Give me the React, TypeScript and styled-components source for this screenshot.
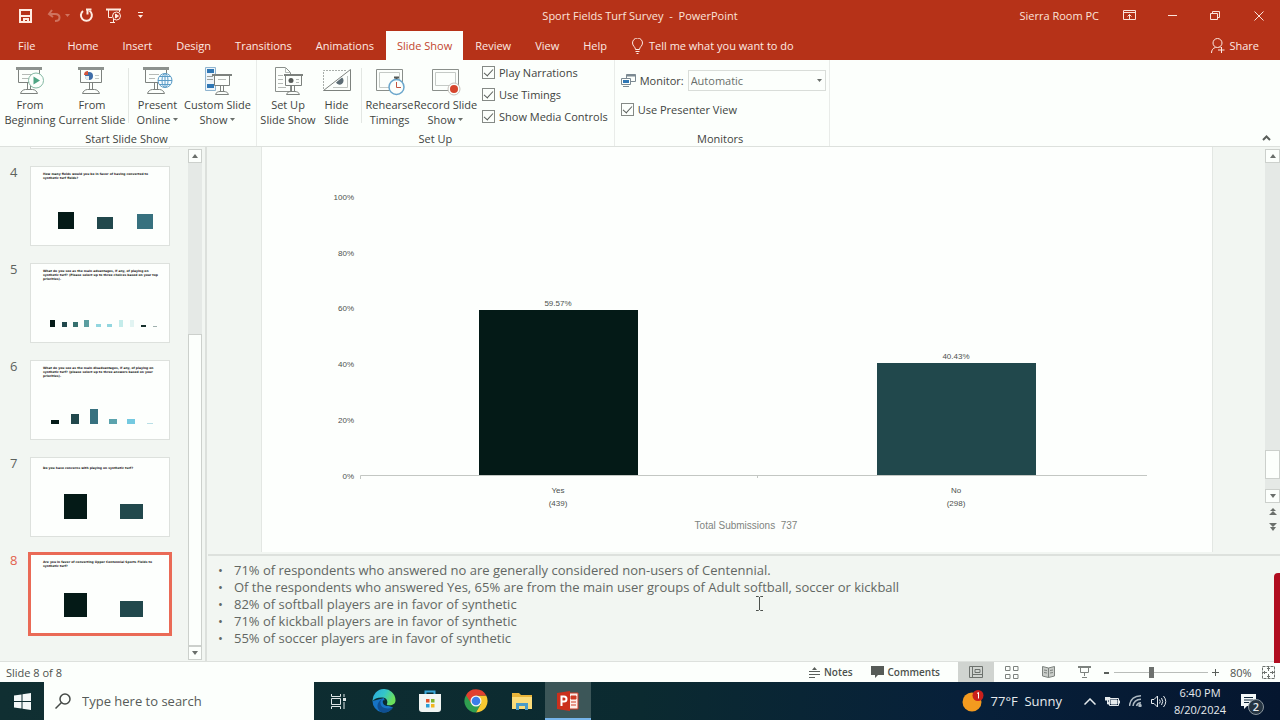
import React from "react";
import styled, { createGlobalStyle, css } from "styled-components";

const GlobalStyle = createGlobalStyle`
  * { box-sizing: border-box; }
  body {
    margin: 0;
    background: #fcfffc;
    color: #3f4441;
    font-family: "Open Sans", "Noto Sans", sans-serif;
    font-size: 11px;
    line-height: 15px;
  }
  button, input, select {
    font: inherit;
    color: inherit;
    margin: 0;
    padding: 0;
    border: 0;
    background: none;
  }
  svg { display: block; flex: none; }
  ul, ol, h2, p { margin: 0; padding: 0; list-style: none; font-size: inherit; font-weight: inherit; }
`;

const RED = "#b63218";
const PANEL = "#f2f6f2";
const LINE = "#dde1dd";

const Window = styled.div`
  position: relative;
  display: flex;
  flex-direction: column;
  height: 100vh;
  min-height: 600px;
  overflow: hidden;
`;

/* ---------- title bar ---------- */

const TitleBar = styled.header`
  display: grid;
  grid-template-columns: 1fr auto 1fr;
  align-items: center;
  height: 31px;
  background: ${RED};
  color: #fbe3da;
`;

const QuickAccess = styled.div`
  display: flex;
  align-items: center;
  padding-left: 18px;
`;

const QuickButton = styled.button<{ $w: number; $dim?: boolean }>`
  display: grid;
  place-items: center start;
  width: ${(p) => p.$w}px;
  height: 24px;
  opacity: ${(p) => (p.$dim ? 0.35 : 1)};
`;

const WindowControls = styled.div`
  display: flex;
  align-items: center;
  justify-content: flex-end;
`;

const UserName = styled.span`
  padding-right: 9px;
`;

const WindowButton = styled.button`
  display: grid;
  place-items: center;
  width: 43px;
  height: 30px;
`;

/* ---------- tabs ---------- */

const TabBar = styled.nav`
  display: flex;
  align-items: stretch;
  height: 29px;
  background: ${RED};
  color: #fdeae3;
`;

const Tab = styled.button<{ $active?: boolean; $file?: boolean }>`
  padding: ${(p) => (p.$file ? "0 20px 0 18px" : "0 12px")};
  font-weight: 500;
  ${(p) =>
    p.$active &&
    css`
      padding: 0 11px;
      background: #fcfffc;
      color: #c2452e;
    `}
`;

const TellMe = styled.button`
  display: flex;
  align-items: center;
  gap: 6px;
  padding: 0 13px;
  font-weight: 500;
`;

const ShareButton = styled(TellMe)`
  margin-left: auto;
  padding: 0 21px 0 0;
  gap: 4px;
`;

/* ---------- ribbon ---------- */

const Ribbon = styled.section`
  display: flex;
  height: 87px;
  border-bottom: 1px solid ${LINE};
`;

const Group = styled.div<{ $pad?: number }>`
  display: flex;
  flex-direction: column;
  justify-content: space-between;
  padding: 4px 3px 0 ${(p) => p.$pad ?? 0}px;
  border-right: 1px solid #e9ece9;
`;

const GroupBody = styled.div`
  display: flex;
`;

const GroupLabel = styled.h2`
  text-align: center;
  line-height: 15px;
`;

const BigButton = styled.button<{ $w: number }>`
  display: flex;
  flex-direction: column;
  align-items: center;
  width: ${(p) => p.$w}px;
  padding-top: 3px;
  white-space: nowrap;
`;

const Caption = styled.span`
  display: block;
  text-align: center;
`;

const Separator = styled.span`
  width: 1px;
  margin: 4px 4px;
  background: #e3e7e3;
`;

const CheckList = styled.div`
  display: flex;
  flex-direction: column;
  gap: 7px;
  padding: 1px 3px 0 4px;
`;

const CheckLabel = styled.label`
  display: flex;
  align-items: center;
  gap: 4px;
  white-space: nowrap;
`;

const CheckBox = styled.input`
  appearance: none;
  display: grid;
  place-items: center;
  width: 13px;
  height: 13px;
  border: 1px solid #858a86;
  &:checked::after {
    content: "";
    width: 8px;
    height: 4px;
    border: solid #5a5f5b;
    border-width: 0 0 1px 1px;
    transform: translateY(-1px) rotate(-48deg);
  }
`;

const MonitorPanel = styled.div`
  display: flex;
  flex-direction: column;
  gap: 11px;
  padding: 6px 0 0 6px;
`;

const MonitorRow = styled.label`
  display: flex;
  align-items: center;
  gap: 4px;
`;

const SelectWrap = styled.span`
  position: relative;
  display: block;
  svg {
    position: absolute;
    right: 4px;
    top: 9px;
    pointer-events: none;
  }
`;

const MonitorSelect = styled.select`
  appearance: none;
  display: block;
  width: 138px;
  height: 21px;
  padding: 0 2px;
  border: 1px solid #d9ddd9;
  color: #6a6f6b;
`;

const CollapseButton = styled.button`
  align-self: flex-end;
  margin-left: auto;
  padding: 0 9px 5px;
`;

/* ---------- workspace ---------- */

const Workspace = styled.main`
  display: flex;
  flex: 1;
  min-height: 0;
  background: ${PANEL};
`;

const SlideList = styled.ol`
  display: flex;
  flex-direction: column;
  justify-content: flex-end;
  gap: 17px;
  width: 188px;
  padding-bottom: 27px;
  overflow: hidden;
`;

const SlideItem = styled.li<{ $active?: boolean }>`
  display: flex;
  flex: none;
  color: ${(p) => (p.$active ? "#e2604c" : "#5d625e")};
  font-size: 13px;
  line-height: 12px;
`;

const SlideNumber = styled.span`
  width: 30px;
  padding-left: 10px;
`;

const Thumb = styled.button<{ $active?: boolean }>`
  display: flex;
  flex-direction: column;
  width: 140px;
  height: 80px;
  background: #fdfffd;
  border: 1px solid #dde1dd;
  text-align: left;
  ${(p) =>
    p.$active &&
    css`
      border-color: #ea6a56;
      outline: 2px solid #ea6a56;
    `}
`;

const ThumbTitle = styled.span<{ $low?: boolean }>`
  height: 20px;
  padding: ${(p) => (p.$low ? 8 : 5)}px 0 0 12px;
  color: #111;
  font: 700 3px/4px "DejaVu Sans", sans-serif;
  white-space: pre;
`;

const Scroll = styled.div<{ $w: number }>`
  display: flex;
  flex-direction: column;
  width: ${(p) => p.$w}px;
  padding: 2px 0 1px;
`;

const ScrollButton = styled.button<{ $plain?: boolean }>`
  display: grid;
  place-items: center;
  height: ${(p) => (p.$plain ? 16 : 14)}px;
  border: ${(p) => (p.$plain ? "0" : "1px solid #ccd0cc")};
  background: ${(p) => (p.$plain ? "transparent" : "#fcfffc")};
`;

const Track = styled.div`
  display: flex;
  flex-direction: column;
  flex: 1;
  background: #e5e9e6;
`;

const TrackSpace = styled.span<{ $size: number }>`
  flex: ${(p) => p.$size};
`;

const TrackThumb = styled.span<{ $size: number }>`
  flex: ${(p) => p.$size};
  border: 1px solid #ccd0cc;
  background: #fcfffc;
`;

const TrackEnd = styled.span`
  height: 18px;
`;

const Splitter = styled.div`
  width: 5px;
  margin-right: 1px;
  border-right: 2px solid #dce0dc;
`;

const Editor = styled.div`
  display: flex;
  flex: 1;
  flex-direction: column;
  min-width: 0;
`;

const Stage = styled.div`
  display: flex;
  flex: 1;
  min-height: 0;
`;

const Slide = styled.article`
  flex: 1;
  margin: 0 52px 2px 53px;
  border: solid #e3e7e3;
  border-width: 0 1px;
  background: #fdfffd;
  overflow: hidden;
`;

const Notes = styled.ul`
  min-height: 107px;
  padding: 6px 10px 14px;
  border-top: 2px solid ${LINE};
  color: #626763;
  font-size: 13px;
  line-height: 17px;
`;

const Note = styled.li`
  display: flex;
  &::before {
    content: "•";
    width: 16px;
  }
`;

/* ---------- status bar ---------- */

const StatusBar = styled.footer`
  display: flex;
  align-items: center;
  height: 21px;
  padding: 0 5px 0 6px;
  border-top: 1px solid ${LINE};
  color: #4c514d;
`;

const StatusLeft = styled.span`
  margin-right: auto;
`;

const StatusButton = styled.button`
  display: flex;
  align-items: center;
  gap: 4px;
  margin-right: 18px;
  font-size: 10px;
  font-weight: 600;
`;

const ViewButton = styled.button<{ $active?: boolean }>`
  display: grid;
  place-items: center;
  width: 36px;
  height: 20px;
  background: ${(p) => (p.$active ? "#d0d4d0" : "transparent")};
`;

const ZoomButton = styled.button`
  display: grid;
  place-items: center;
  min-width: 9px;
`;

const ZoomSlider = styled.input`
  appearance: none;
  width: 94px;
  height: 12px;
  margin: 0 3px;
  background: linear-gradient(#b9bdb9, #b9bdb9) center / 100% 1px no-repeat;
  &::-webkit-slider-thumb {
    appearance: none;
    width: 5px;
    height: 11px;
    background: #6d716e;
  }
`;

const ZoomValue = styled.span`
  width: 42px;
  padding-left: 10px;
`;

/* ---------- task bar ---------- */

const TaskBar = styled.div`
  display: flex;
  align-items: center;
  height: 38px;
  background: linear-gradient(90deg, #102f32, #0b2a30 50%, #07203a 75%, #05162f);
  color: #e6ebee;
`;

const StartButton = styled.button`
  display: grid;
  place-items: center;
  width: 44px;
  height: 38px;
`;

const SearchBox = styled.label`
  display: flex;
  align-items: center;
  gap: 11px;
  width: 270px;
  height: 38px;
  padding-left: 11px;
  background: #fcfffc;
  color: #565b58;
  font-size: 13px;
  input { width: 180px; }
  input::placeholder { color: #565b58; opacity: 1; }
`;

const TaskButtons = styled.div`
  display: flex;
  padding-left: 1px;
`;

const TaskButton = styled.button<{ $active?: boolean }>`
  display: grid;
  place-items: center;
  width: 46px;
  height: 38px;
  border: solid transparent;
  border-width: 2px 0;
  ${(p) =>
    p.$active &&
    css`
      background: #3c5658;
      border-top-color: #3c5658;
      border-bottom-color: #76b4ea;
    `}
`;

const Tray = styled.div`
  display: flex;
  align-items: center;
  margin-left: auto;
`;

const Weather = styled.button`
  display: flex;
  align-items: center;
  gap: 7px;
  margin-right: 16px;
  font-size: 13px;
`;

const TrayButton = styled.button`
  display: grid;
  place-items: center;
  width: 23px;
  height: 38px;
`;

const Clock = styled.button`
  width: 60px;
  text-align: center;
  line-height: 17px;
`;

const Bell = styled.button`
  position: relative;
  width: 50px;
  height: 38px;
  padding-left: 11px;
`;

const BellBadge = styled.span`
  position: absolute;
  left: 18px;
  top: 17px;
  width: 16px;
  height: 16px;
  border: 1px solid #8b969f;
  border-radius: 50%;
  background: #253442;
  font-weight: 600;
  line-height: 14px;
`;

const RecordingEdge = styled.div`
  position: absolute;
  right: 0;
  bottom: 57px;
  width: 6px;
  height: 90px;
  border-radius: 4px 0 0 0;
  background: #b00d1f;
`;

const Pointer = styled.svg`
  position: absolute;
  left: 755px;
  top: 596px;
`;

/* ---------- drawings ---------- */

const Triangle = ({ up }: { up?: boolean }) => (
  <svg width="6" height="4" viewBox="0 0 6 4">
    <path d={up ? "M0 4L3 0L6 4z" : "M0 0H6L3 4z"} fill="#6a6f6b" />
  </svg>
);

const Caret = () => (
  <svg width="5" height="3" viewBox="0 0 5 3">
    <path d="M0 0H5L2.5 3z" fill="#6a6f6b" />
  </svg>
);

const CaretLine = styled.span`
  display: flex;
  align-items: center;
  justify-content: center;
  gap: 3px;
`;

const Easel = ({ x = 0, y = 0 }: { x?: number; y?: number }) => (
  <g transform={`translate(${x} ${y})`} fill="none" stroke="#7d827e">
    <path d="M2.500 3V15.500H23.500V3" fill="#fcfffc" />
    <path d="M0 1.500H26" strokeWidth="3" stroke="#8d928e" />
    <path d="M11.500 16V23M14.500 16V23" />
    <path d="M4.500 26.500H21.500C21 24.500 19 22.500 16.500 22.500H9.500C7 22.500 5 24.500 4.500 26.500z" />
  </g>
);

const FromBeginningIcon = () => (
  <svg width="30" height="30" viewBox="0 0 30 30">
    <Easel x={1} />
    <path d="M7 7.500H20M7 11.500H14" stroke="#b5bab6" />
    <circle cx="21" cy="13.500" r="7.500" fill="#fcfffc" stroke="#83b9a3" />
    <path d="M18.500 9.500V17.500L25 13.500z" fill="#4fa584" />
  </svg>
);

const FromCurrentIcon = () => (
  <svg width="30" height="30" viewBox="0 0 30 30">
    <Easel x={1} />
    <circle cx="12" cy="9" r="4" fill="#3d6da8" />
    <path d="M11 8V4A4 4 0 0 0 7 8z" fill="#d2543c" />
    <path d="M12 9V13A4 4 0 0 1 8 9z" fill="#e8eef0" />
    <path d="M18 8.500H22M18 11.500H22" stroke="#c5cac6" />
  </svg>
);

const PresentOnlineIcon = () => (
  <svg width="30" height="30" viewBox="0 0 30 30">
    <Easel />
    <path d="M6 7.500H16M6 11.500H12" stroke="#b5bab6" />
    <g fill="#f4fbff" stroke="#5a9cc6">
      <circle cx="22" cy="13.500" r="7" />
      <ellipse cx="22" cy="13.500" rx="3" ry="7" />
      <path d="M15 13.500H29M16.500 9.500H27.500M16.500 17.500H27.500M22 6.500V20.500" />
    </g>
  </svg>
);

const CustomShowIcon = () => (
  <svg width="30" height="30" viewBox="0 0 30 30">
    <path d="M2.500 .500H12.500V23.500H2.500z" fill="#eef5fa" stroke="#8fb4cf" />
    <path d="M4 2H11V6H4zM4 17H11V21H4z" fill="#2f77b5" />
    <path d="M4 9.500H10M4 12.500H10" stroke="#9aa09c" />
    <g fill="none" stroke="#7d827e">
      <path d="M11.500 9V18.500H26.500V9" fill="#fcfffc" />
      <path d="M9 8H29" strokeWidth="2" />
      <path d="M17.500 18.500V24M20.500 18.500V24M12.500 27.500H25.500C25 25.500 23 24.500 21 24.500H17C15 24.500 13 25.500 12.500 27.500z" />
      <path d="M15 12.500H23" stroke="#b5bab6" />
    </g>
  </svg>
);

const SetUpIcon = () => (
  <svg width="30" height="30" viewBox="0 0 30 30">
    <g fill="none" stroke="#8a8f8b">
      <path d="M2.500 .500H12.500L17.500 5.500V24.500H2.500z" />
      <path d="M12.500 .500V5.500H17.500M5 8.500H10M5 12.500H10M5 16.500H10M5 20.500H13" stroke="#b5bab6" />
      <path d="M12.500 9V18.500H28.500V9" fill="#fcfffc" stroke="#7d827e" />
      <path d="M11 8H30" strokeWidth="2" stroke="#7d827e" />
      <path d="M18.500 18.500V24M21.500 18.500V24M13.500 27.500H26.500C26 25.500 24 24.500 22 24.500H18C16 24.500 14 25.500 13.500 27.500z" stroke="#7d827e" />
    </g>
    <circle cx="18" cy="13.500" r="2.500" fill="#555a57" />
    <path d="M23 12.500H26M23 15.500H26" stroke="#b5bab6" />
  </svg>
);

const HideIcon = () => (
  <svg width="30" height="30" viewBox="0 0 30 30">
    <path d="M1.500 22V3.500H25" fill="none" stroke="#a9aeaa" strokeDasharray="2 1" />
    <path d="M1.500 23.500L28.500 2.500V23.500z" fill="#fcfffc" stroke="#7d827e" />
    <path d="M11 20.500H25.500V9" fill="none" stroke="#c0c5c1" />
    <path d="M14 15.500L20 10.500A4 4 0 1 1 14 15.500z" fill="#5c6c74" />
  </svg>
);

const RehearseIcon = () => (
  <svg width="30" height="30" viewBox="0 0 30 30">
    <path d="M1.500 2.500H27.500V23.500H1.500z" fill="#fcfffc" stroke="#8a8f8b" />
    <path d="M4.500 5.500H24.500V20.500H4.500z" fill="none" stroke="#c5cac6" />
    <circle cx="21.500" cy="20" r="7.500" fill="#fcfffc" stroke="#6aa6cc" strokeWidth="1.500" />
    <path d="M19 10.500H24M21.500 10V12" stroke="#555a57" strokeWidth="2" />
    <path d="M21.500 15V20.500H26" fill="none" stroke="#c45440" />
  </svg>
);

const RecordIcon = () => (
  <svg width="30" height="30" viewBox="0 0 30 30">
    <path d="M1.500 2.500H27.500V23.500H1.500z" fill="#fcfffc" stroke="#8a8f8b" />
    <path d="M4.500 5.500H24.500V18.500H4.500z" fill="none" stroke="#c5cac6" />
    <circle cx="23" cy="22" r="6" fill="#fcfffc" stroke="#c7c3be" />
    <circle cx="23" cy="22" r="4" fill="#d6452c" />
  </svg>
);

const MonitorIcon = () => (
  <svg width="15" height="15" viewBox="0 0 15 15" fill="#fcfffc" stroke="#7c8a92">
    <path d="M5.500 1.500H14.500V8.500H5.500z" />
    <path d="M5.500 2.500H14.500" strokeWidth="2" />
    <path d="M.500 5.500H9.500V11.500H.500z" />
    <path d="M2 7H8V10H2z" fill="#2f77b5" stroke="none" />
    <path d="M2 13.500H8" />
  </svg>
);

type Bar = { x: number; w: number; h: number; c: string };

const thumbs: { n: number; title: string; low?: boolean; base: number; bars: Bar[] }[] = [
  { n: 3, title: "", base: 40, bars: [] },
  {
    n: 4,
    title: "How many fields would you be in favor of having converted to\nsynthetic turf fields?",
    base: 42,
    bars: [
      { x: 27, w: 16, h: 17, c: "#041a17" },
      { x: 66, w: 16, h: 12, c: "#21484c" },
      { x: 106, w: 16, h: 15, c: "#37717f" },
    ],
  },
  {
    n: 5,
    title:
      "What do you see as the main advantages, if any, of playing on\nsynthetic turf? (Please select up to three choices based on your top\npriorities).",
    base: 43,
    bars: [
      { x: 19, w: 5, h: 7, c: "#041a17" },
      { x: 31, w: 5, h: 5, c: "#21484c" },
      { x: 42, w: 5, h: 5, c: "#37716f" },
      { x: 53, w: 5, h: 7, c: "#5b9ea0" },
      { x: 65, w: 5, h: 3, c: "#92d6df" },
      { x: 76, w: 5, h: 3, c: "#92d6df" },
      { x: 88, w: 4, h: 7, c: "#c4ecea" },
      { x: 99, w: 4, h: 7, c: "#e2f4f2" },
      { x: 110, w: 5, h: 2, c: "#16302c" },
      { x: 122, w: 4, h: 1, c: "#9fb0ae" },
    ],
  },
  {
    n: 6,
    title:
      "What do you see as the main disadvantages, if any, of playing on\nsynthetic turf? (please select up to three answers based on your\npriorities).",
    base: 43,
    bars: [
      { x: 20, w: 8, h: 4, c: "#041a17" },
      { x: 40, w: 8, h: 10, c: "#21484c" },
      { x: 59, w: 8, h: 15, c: "#37717f" },
      { x: 78, w: 8, h: 5, c: "#5ba3ad" },
      { x: 96, w: 8, h: 5, c: "#74c9e0" },
      { x: 116, w: 6, h: 1, c: "#b9dfe6" },
    ],
  },
  {
    n: 7,
    title: "Do you have concerns with playing on synthetic turf?",
    low: true,
    base: 41,
    bars: [
      { x: 33, w: 23, h: 25, c: "#041a17" },
      { x: 89, w: 23, h: 15, c: "#21484c" },
    ],
  },
  {
    n: 8,
    title: "Are you in favor of converting Upper Centennial Sports Fields to\nsynthetic turf?",
    base: 42,
    bars: [
      { x: 33, w: 23, h: 24, c: "#041a17" },
      { x: 89, w: 23, h: 16, c: "#21484c" },
    ],
  },
];

const ChartText = styled.text`
  font: 8px "Liberation Sans Narrow", "Liberation Sans", sans-serif;
  fill: #4c514d;
`;

const ChartTotal = styled(ChartText)`
  font-size: 10px;
  fill: #7f8480;
`;

const ticks = [
  ["100%", 53],
  ["80%", 109],
  ["60%", 164],
  ["40%", 220],
  ["20%", 276],
  ["0%", 332],
] as const;

const Chart = () => (
  <svg width="100%" viewBox="0 0 950 405" role="img" aria-label="Survey results">
    {ticks.map(([t, y]) => (
      <ChartText key={t} x="92" y={y} textAnchor="end">{t}</ChartText>
    ))}
    <path d="M98.500 332V328.500H885M495.500 329V331" fill="none" stroke="#c3c7c3" />
    <rect x="217" y="163" width="159" height="165" fill="#041a17" />
    <rect x="615" y="216" width="159" height="112" fill="#21484c" />
    <g textAnchor="middle">
      <ChartText x="296" y="159">59.57%</ChartText>
      <ChartText x="694" y="212">40.43%</ChartText>
      <ChartText x="296" y="346">Yes</ChartText>
      <ChartText x="296" y="359">(439)</ChartText>
      <ChartText x="694" y="346">No</ChartText>
      <ChartText x="694" y="359">(298)</ChartText>
      <ChartTotal x="484" y="382">Total Submissions&nbsp; 737</ChartTotal>
    </g>
  </svg>
);

const notes = [
  "71% of respondents who answered no are generally considered non-users of Centennial.",
  "Of the respondents who answered Yes, 65% are from the main user groups of Adult softball, soccer or kickball",
  "82% of softball players are in favor of synthetic",
  "71% of kickball players are in favor of synthetic",
  "55% of soccer players are in favor of synthetic",
];

const Big = ({ w, icon, a, b, menu }: { w: number; icon: React.ReactNode; a: string; b: string; menu?: boolean }) => (
  <BigButton $w={w}>
    {icon}
    <Caption>
      {a}
      <CaretLine>
        {b}
        {menu && <Caret />}
      </CaretLine>
    </Caption>
  </BigButton>
);

const Check = ({ label }: { label: string }) => (
  <CheckLabel>
    <CheckBox type="checkbox" defaultChecked />
    {label}
  </CheckLabel>
);

export default function App() {
  return (
    <Window>
      <GlobalStyle />
      <TitleBar>
        <QuickAccess>
          <QuickButton $w={29} aria-label="Save">
            <svg width="15" height="14" viewBox="0 0 15 14" fill="none" stroke="#ffece2" strokeWidth="2">
              <path d="M2 1H13V13H2z" />
              <path d="M2 7H13M6 13V10H10V13" />
            </svg>
          </QuickButton>
          <QuickButton $w={32} $dim aria-label="Undo">
            <svg width="24" height="14" viewBox="0 0 24 14" fill="none" stroke="#ffece2" strokeWidth="2">
              <path d="M5 1L2 5L6 8M2 5H8C14 5 14 12 8 12" />
              <path d="M18 5H23L20.500 8z" fill="#ffece2" stroke="none" />
            </svg>
          </QuickButton>
          <QuickButton $w={27} aria-label="Redo">
            <svg width="15" height="15" viewBox="0 0 15 15" fill="none" stroke="#ffece2" strokeWidth="2">
              <path d="M4 3A5.500 5.500 0 1 0 10.500 2.800" />
              <path d="M7 1.500H12.500M8.500 1V6.500" />
            </svg>
          </QuickButton>
          <QuickButton $w={31} aria-label="Start from beginning">
            <svg width="16" height="16" viewBox="0 0 16 16" fill="none" stroke="#ffece2">
              <path d="M0 1.500H15" strokeWidth="2" />
              <path d="M2.500 2V9.500H6M13.500 2V4M4 14.500H9M7.500 11V14" />
              <circle cx="10.500" cy="8" r="4" />
              <path d="M9.500 6V10L12.500 8z" fill="#ffece2" />
            </svg>
          </QuickButton>
          <QuickButton $w={10} aria-label="Customize toolbar">
            <svg width="7" height="7" viewBox="0 0 7 7" fill="#ffece2">
              <path d="M1 0H6V1H1zM1 3H6L3.500 6z" />
            </svg>
          </QuickButton>
        </QuickAccess>
        <span>Sport Fields Turf Survey&nbsp; -&nbsp; PowerPoint</span>
        <WindowControls>
          <UserName>Sierra Room PC</UserName>
          <WindowButton aria-label="Ribbon display options">
            <svg width="13" height="11" viewBox="0 0 13 11" fill="none" stroke="#fbe3da">
              <path d="M.500 .500H12.500V9.500H.500zM.500 2.500H12.500M6.500 9V4.500M4.500 6.500L6.500 4.500L8.500 6.500" />
            </svg>
          </WindowButton>
          <WindowButton aria-label="Minimize">
            <svg width="10" height="2" viewBox="0 0 10 2" fill="#fbe3da">
              <path d="M0 0H9V1H0z" />
            </svg>
          </WindowButton>
          <WindowButton aria-label="Restore">
            <svg width="11" height="11" viewBox="0 0 11 11" fill="none" stroke="#fbe3da">
              <path d="M.500 3.500H7.500V9.500H.500zM2.500 3V1.500H9.500V7.500H8" />
            </svg>
          </WindowButton>
          <WindowButton aria-label="Close">
            <svg width="10" height="10" viewBox="0 0 10 10" fill="none" stroke="#fbe3da">
              <path d="M.500 .500L9.500 9.500M9.500 .500L.500 9.500" />
            </svg>
          </WindowButton>
        </WindowControls>
      </TitleBar>

      <TabBar>
        <Tab $file>File</Tab>
        {["Home", "Insert", "Design", "Transitions", "Animations"].map((t) => (
          <Tab key={t}>{t}</Tab>
        ))}
        <Tab $active>Slide Show</Tab>
        {["Review", "View", "Help"].map((t) => (
          <Tab key={t}>{t}</Tab>
        ))}
        <TellMe>
          <svg width="11" height="16" viewBox="0 0 11 16" fill="none" stroke="#fdeae3">
            <path d="M3.500 11.500C3.500 9 .500 8 .500 5A5 5 0 0 1 10.500 5C10.500 8 7.500 9 7.500 11.500zM3.500 13.500H7.500M4.500 15.500H6.500" />
          </svg>
          Tell me what you want to do
        </TellMe>
        <ShareButton>
          <svg width="14" height="15" viewBox="0 0 14 15" fill="none" stroke="#fdeae3">
            <circle cx="6.500" cy="5" r="4.500" />
            <path d="M.500 15C.500 12 2 10 4.500 9.500M8.500 9L9.500 9.500M7 12H13.500M10.500 9V15" />
          </svg>
          Share
        </ShareButton>
      </TabBar>

      <Ribbon>
        <Group>
          <GroupBody>
            <Big w={60} icon={<FromBeginningIcon />} a="From" b="Beginning" />
            <Big w={64} icon={<FromCurrentIcon />} a="From" b="Current Slide" />
            <Separator />
            <Big w={49} icon={<PresentOnlineIcon />} a="Present" b="Online" menu />
            <Big w={71} icon={<CustomShowIcon />} a="Custom Slide" b="Show" menu />
          </GroupBody>
          <GroupLabel>Start Slide Show</GroupLabel>
        </Group>
        <Group $pad={3}>
          <GroupBody>
            <Big w={56} icon={<SetUpIcon />} a="Set Up" b="Slide Show" />
            <Big w={41} icon={<HideIcon />} a="Hide" b="Slide" />
            <Separator />
            <Big w={47} icon={<RehearseIcon />} a="Rehearse" b="Timings" />
            <Big w={65} icon={<RecordIcon />} a="Record Slide" b="Show" menu />
            <CheckList>
              <Check label="Play Narrations" />
              <Check label="Use Timings" />
              <Check label="Show Media Controls" />
            </CheckList>
          </GroupBody>
          <GroupLabel>Set Up</GroupLabel>
        </Group>
        <Group>
          <MonitorPanel>
            <MonitorRow>
              <MonitorIcon />
              Monitor:
              <SelectWrap>
                <MonitorSelect>
                  <option>Automatic</option>
                </MonitorSelect>
                <Caret />
              </SelectWrap>
            </MonitorRow>
            <Check label="Use Presenter View" />
          </MonitorPanel>
          <GroupLabel>Monitors</GroupLabel>
        </Group>
        <CollapseButton aria-label="Collapse ribbon">
          <svg width="9" height="6" viewBox="0 0 9 6" fill="none" stroke="#5a5f5b" strokeWidth="2">
            <path d="M1 5L4.500 1.500L8 5" />
          </svg>
        </CollapseButton>
      </Ribbon>

      <Workspace>
        <SlideList>
          {thumbs.map((t) => {
            const active = t.n === 8;
            return (
              <SlideItem key={t.n} $active={active}>
                <SlideNumber>{t.title && t.n}</SlideNumber>
                <Thumb $active={active} aria-label={`Slide ${t.n}`}>
                  <ThumbTitle $low={t.low}>{t.title}</ThumbTitle>
                  <svg width="138" height="50" viewBox="0 0 138 50">
                    {t.bars.map((b) => (
                      <rect key={b.x} x={b.x} y={t.base - b.h} width={b.w} height={b.h} fill={b.c} />
                    ))}
                  </svg>
                </Thumb>
              </SlideItem>
            );
          })}
        </SlideList>
        <Scroll $w={14}>
          <ScrollButton aria-label="Scroll up"><Triangle up /></ScrollButton>
          <Track>
            <TrackSpace $size={172} />
            <TrackThumb $size={311} />
          </Track>
          <ScrollButton aria-label="Scroll down"><Triangle /></ScrollButton>
        </Scroll>
        <Splitter />
        <Editor>
          <Stage>
            <Slide>
              <Chart />
            </Slide>
            <Scroll $w={15}>
              <ScrollButton aria-label="Scroll up"><Triangle up /></ScrollButton>
              <Track>
                <TrackSpace $size={289} />
                <TrackThumb $size={27} />
                <TrackSpace $size={10} />
              </Track>
              <ScrollButton aria-label="Scroll down"><Triangle /></ScrollButton>
              <ScrollButton $plain aria-label="Previous slide">
                <svg width="8" height="9" viewBox="0 0 8 9" fill="#6a6f6b">
                  <path d="M1 4L4 1L7 4zM0 8L4 4L8 8z" />
                </svg>
              </ScrollButton>
              <ScrollButton $plain aria-label="Next slide">
                <svg width="8" height="9" viewBox="0 0 8 9" fill="#6a6f6b">
                  <path d="M0 0H8L4 4zM1 4H7L4 8z" />
                </svg>
              </ScrollButton>
              <TrackEnd />
            </Scroll>
          </Stage>
          <Notes>
            {notes.map((n) => (
              <Note key={n}>{n}</Note>
            ))}
          </Notes>
        </Editor>
      </Workspace>

      <StatusBar>
        <StatusLeft>Slide 8 of 8</StatusLeft>
        <StatusButton>
          <svg width="11" height="11" viewBox="0 0 11 11" fill="#5a5f5b">
            <path d="M3 3L5.500 0L8 3zM0 4H11V5H0zM0 7H11V8H0zM0 10H6V11H0z" />
          </svg>
          Notes
        </StatusButton>
        <StatusButton>
          <svg width="13" height="12" viewBox="0 0 13 12" fill="#565b57">
            <path d="M0 0H13V9H7L4 12V9H0z" />
          </svg>
          Comments
        </StatusButton>
        <ViewButton $active aria-label="Normal view">
          <svg width="14" height="12" viewBox="0 0 14 12" fill="none" stroke="#6d726e">
            <path d="M.500 .500H13.500V11.500H.500zM3.500 .500V11.500M3.500 8.500H13.500M6 3.500H11V6.500H6z" />
          </svg>
        </ViewButton>
        <ViewButton aria-label="Slide sorter">
          <svg width="14" height="13" viewBox="0 0 14 13" fill="none" stroke="#7d827e">
            <path d="M.500 .500H5V4.500H.500zM8.500 .500H13V4.500H8.500zM.500 8.500H5V12.500H.500zM8.500 8.500H13V12.500H8.500z" />
          </svg>
        </ViewButton>
        <ViewButton aria-label="Reading view">
          <svg width="13" height="12" viewBox="0 0 13 12" fill="#c9cdc9" stroke="#7d827e">
            <path d="M.500 .500L6.500 2L12.500 .500V10L6.500 11.500L.500 10zM6.500 2V11.500M2 4L5 4.500M2 6.500L5 7M11 4L8 4.500M11 6.500L8 7" />
          </svg>
        </ViewButton>
        <ViewButton aria-label="Slide show">
          <svg width="13" height="12" viewBox="0 0 13 12" fill="none" stroke="#7d827e">
            <path d="M0 1H13" strokeWidth="2" />
            <path d="M2.500 2V6.500H10.500V2M6.500 7V10M4 11.500H9" />
          </svg>
        </ViewButton>
        <ZoomButton aria-label="Zoom out">
          <svg width="7" height="7" viewBox="0 0 7 7" fill="#5a5f5b"><path d="M1 3H6V5H1z" /></svg>
        </ZoomButton>
        <ZoomSlider type="range" min="10" max="190" defaultValue="80" aria-label="Zoom" />
        <ZoomButton aria-label="Zoom in">
          <svg width="7" height="7" viewBox="0 0 7 7" fill="#5a5f5b"><path d="M0 3H3V0H4V3H7V4H4V7H3V4H0z" /></svg>
        </ZoomButton>
        <ZoomValue>80%</ZoomValue>
        <ZoomButton aria-label="Fit slide to window">
          <svg width="13" height="13" viewBox="0 0 13 13" fill="none" stroke="#6d726e">
            <path d="M.500 .500H12.500V12.500H.500z" strokeDasharray="3 1" />
            <path d="M6.500 1V5M6.500 8V12M1 6.500H5M8 6.500H12M5 3L6.500 1.500L8 3M5 10L6.500 11.500L8 10M3 5L1.500 6.500L3 8M10 5L11.500 6.500L10 8" />
          </svg>
        </ZoomButton>
      </StatusBar>

      <TaskBar>
        <StartButton aria-label="Start">
          <svg width="17" height="17" viewBox="0 0 17 17" fill="#f4f8f8">
            <path d="M0 2.500L7.500 1.500V8H0zM8.500 1.300L17 0V8H8.500zM0 9H7.500V15.500L0 14.500zM8.500 9H17V17L8.500 15.700z" />
          </svg>
        </StartButton>
        <SearchBox>
          <svg width="16" height="16" viewBox="0 0 16 16" fill="none" stroke="#454a47">
            <circle cx="10" cy="6" r="5" strokeWidth="1.500" />
            <path d="M6.500 9.500L.500 15.500" strokeWidth="1.500" />
          </svg>
          <input type="text" placeholder="Type here to search" aria-label="Search" />
        </SearchBox>
        <TaskButtons>
          <TaskButton aria-label="Task view">
            <svg width="16" height="15" viewBox="0 0 16 15" fill="none" stroke="#dfe6e8">
              <path d="M1.500 0V2.500H10.500V0M1.500 4.500H10.500V10.500H1.500zM1.500 15V12.500H10.500V15M14 0V3M14 8V15" />
              <path d="M13 4H16V7H13z" fill="#dfe6e8" stroke="none" />
            </svg>
          </TaskButton>
          <TaskButton aria-label="Edge">
            <svg width="24" height="24" viewBox="0 0 24 24">
              <defs>
                <linearGradient id="edgeTop" x1="0" y1="0" x2="1" y2=".4">
                  <stop offset="0" stopColor="#2aa5e0" />
                  <stop offset=".55" stopColor="#35c6c8" />
                  <stop offset="1" stopColor="#6be05a" />
                </linearGradient>
              </defs>
              <path d="M.500 12A11.500 11.500 0 0 0 9 23.100C13.500 24.300 18.500 22.500 21 18.500L14 16L12 9z" fill="#1673c4" />
              <path d="M.500 12A11.500 11.500 0 0 1 23.500 11C24 16 18 17.500 14.500 15.500C16.500 13 15 9 11 8.500C6 8 2 10 .500 12z" fill="url(#edgeTop)" />
              <path d="M8.500 13C8 18 13 21 21 18.500C18 23 13 24.500 9 23C4 20 4 13 11 9.500C9.500 10.500 8.800 11.500 8.500 13z" fill="#0f4f92" />
              <path d="M11 11.500C10 14 12 17.500 17.500 17C15.500 17 14.500 16 14.500 15.500C16 13.500 14.500 10 11 11.500z" fill="#0b2a30" />
            </svg>
          </TaskButton>
          <TaskButton aria-label="Store">
            <svg width="22" height="22" viewBox="0 0 22 22">
              <path d="M6.500 5V1.500H15.500V5" fill="none" stroke="#39a7d8" strokeWidth="2" />
              <path d="M0 4H22V19Q22 22 19 22H3Q0 22 0 19z" fill="#f1f5f3" />
              <path d="M7 9H10.500V12.500H7z" fill="#e4532c" />
              <path d="M12 9H15.500V12.500H12z" fill="#7cb42c" />
              <path d="M7 14H10.500V17.500H7z" fill="#2a9fd8" />
              <path d="M12 14H15.500V17.500H12z" fill="#f3b71e" />
            </svg>
          </TaskButton>
          <TaskButton aria-label="Chrome">
            <svg width="24" height="24" viewBox="0 0 24 24">
              <path d="M12 12L2 6.200A11.500 11.500 0 0 0 12 23.500L16.800 15z" fill="#2f9e4f" />
              <path d="M12 12L12 6.500H22.200A11.500 11.500 0 0 1 12 23.500L16.800 15z" fill="#f8c830" />
              <path d="M2 6.200A11.500 11.500 0 0 1 22.200 6.500H12L7 14z" fill="#e0402f" />
              <circle cx="12" cy="12" r="5.500" fill="#f5f8f5" />
              <circle cx="12" cy="12" r="4.300" fill="#3b7de8" />
            </svg>
          </TaskButton>
          <TaskButton aria-label="File Explorer">
            <svg width="22" height="19" viewBox="0 0 22 19">
              <path d="M1 1H8L10 3H21V17H1z" fill="#e9b53a" />
              <path d="M1 5H21V17H1z" fill="#fbdc7a" />
              <path d="M5 11H17V18H14V14H8V18H5z" fill="#4a9bc8" />
            </svg>
          </TaskButton>
          <TaskButton $active aria-label="PowerPoint">
            <svg width="22" height="20" viewBox="0 0 22 20">
              <path d="M11 2H21V18H11z" fill="#fbeeea" stroke="#cf3a25" />
              <path d="M14 5H19V8H14zM14 11H19M14 14H19" fill="#cf3a25" stroke="#cf3a25" />
              <path d="M0 2L13 0V20L0 18z" fill="#cb2f1c" />
              <path d="M4.500 15V5.500H7Q9.500 5.500 9.500 8Q9.500 10.500 7 10.500H4.500" fill="none" stroke="#fff" strokeWidth="2" />
            </svg>
          </TaskButton>
        </TaskButtons>
        <Tray>
          <Weather>
            <svg width="22" height="22" viewBox="0 0 22 22">
              <circle cx="10" cy="12" r="9.500" fill="#f39a1f" />
              <circle cx="16" cy="5.500" r="5.500" fill="#c9201c" />
              <path d="M15 3.500L16.500 2.500V8.500" fill="none" stroke="#fff" />
            </svg>
            <span>77°F&nbsp;&nbsp;Sunny</span>
          </Weather>
          <TrayButton aria-label="Show hidden icons">
            <svg width="12" height="7" viewBox="0 0 12 7" fill="none" stroke="#e6ebee"><path d="M.500 6.500L6 1L11.500 6.500" strokeWidth="1.500" /></svg>
          </TrayButton>
          <TrayButton aria-label="Battery">
            <svg width="15" height="11" viewBox="0 0 15 11" fill="none" stroke="#e6ebee">
              <path d="M4.500 2.500H13.500V9.500H4.500zM14.500 4.500V7.500" />
              <path d="M6 4H12V8H6z" fill="#e6ebee" />
              <path d="M0 1.500H5V4H0zM2.500 4V8H5" fill="#e6ebee" />
            </svg>
          </TrayButton>
          <TrayButton aria-label="Network">
            <svg width="13" height="12" viewBox="0 0 13 12" fill="none" stroke="#aeb9c2" strokeWidth="1.500">
              <path d="M.500 11C1 5 5 1 12 .800M4 11C4.500 7.500 7 4.500 12 4.300M7.500 11C8 9 9.500 7.800 12 7.700" />
              <circle cx="11" cy="10.500" r="1" fill="#e6ebee" />
            </svg>
          </TrayButton>
          <TrayButton aria-label="Volume">
            <svg width="16" height="13" viewBox="0 0 16 13" fill="none" stroke="#e6ebee">
              <path d="M.500 4.500H3L6.500 1V12L3 8.500H.500zM8.500 4.500Q10 6.500 8.500 8.500M10.500 3Q13 6.500 10.500 10M12.500 1Q17 6.500 12.500 12" />
            </svg>
          </TrayButton>
          <Clock>
            6:40 PM
            <br />
            8/20/2024
          </Clock>
          <Bell aria-label="Notifications, 2 new">
            <svg width="15" height="15" viewBox="0 0 15 15">
              <path d="M0 0H15V12H6L3 15V12H0z" fill="#f4f8f8" />
              <path d="M3 3.500H12M3 6H12M3 8.500H8" stroke="#10263a" />
            </svg>
            <BellBadge>2</BellBadge>
          </Bell>
        </Tray>
      </TaskBar>

      <RecordingEdge />
      <Pointer width="9" height="15" viewBox="0 0 9 15" fill="none" stroke="#4c514d">
        <path d="M1 .500H3.500L4.500 1.500L5.500 .500H8M4.500 1V14M1 14.500H3.500L4.500 13.500L5.500 14.500H8" />
      </Pointer>
    </Window>
  );
}
